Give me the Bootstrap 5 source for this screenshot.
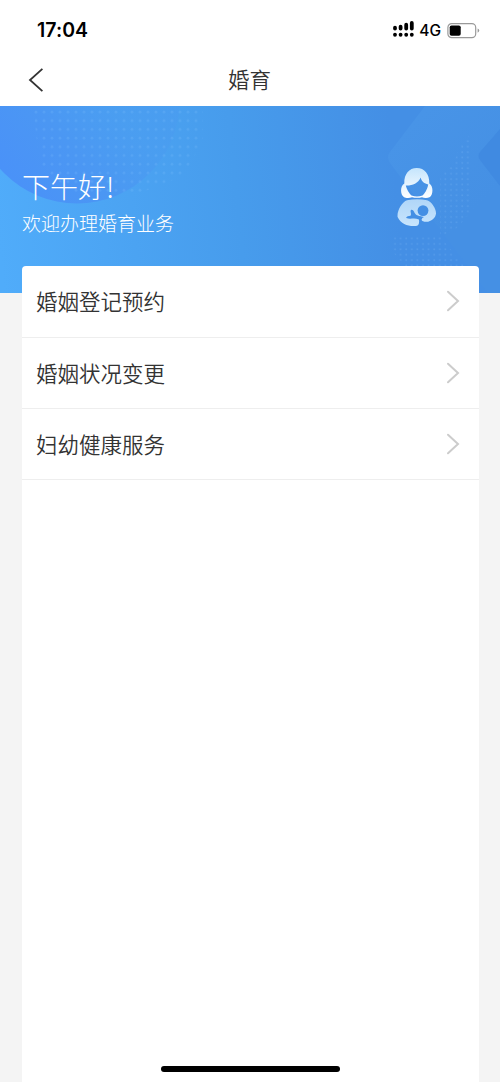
<!DOCTYPE html>
<html lang="zh-CN">
<head>
<meta charset="utf-8">
<meta name="viewport" content="width=device-width, initial-scale=1">
<title>婚育</title>
<link href="https://cdn.jsdelivr.net/npm/bootstrap@5.3.0/dist/css/bootstrap.min.css" rel="stylesheet">
<style>
  body { font-family: "Noto Sans CJK SC", sans-serif; background: #f4f4f4; color: #333; font-weight: 350; }
  .screen { width: 500px; height: 1082px; overflow: hidden; }
  .status { height: 54px; padding: 7px 20px 0 37px; font-family: Inter, sans-serif; color: #000; }
  .clock { font-size: 19.5px; font-weight: 600; letter-spacing: .05px; padding-top: 1px; }
  .network { font-size: 15.5px; font-weight: 500; margin: 0 6px 0 5px; padding-top: 1px; }
  .titlebar { height: 52px; padding: 0 28px; }
  .titlebar h1 { font-size: 21.5px; line-height: 32px; font-weight: 350; padding-right: 1px; margin-top: -2px; }
  .hero { height: 187px; }
  .greeting { padding: 61px 22px 0; color: #fff; }
  .greeting h2 { font-size: 28px; line-height: 38px; font-weight: 300; }
  .greeting p { font-size: 19px; line-height: 28px; margin-top: 4px; font-weight: 300; }
  .panel { margin: -27px 21px 0 22px; border-radius: 4px 4px 0 0; height: 816px; }
  .menu-row { height: 71px; padding: 0 19px 1px 14px; border: 0; font-size: 21.5px; line-height: 32px; color: #333; background: transparent; }
  .menu-row:first-child { height: 72px; }
  .list-group-flush > .menu-row, .list-group-flush > .menu-row:last-child { border-bottom: 1px solid #eee; }
  .mother { left: 397px; top: 61px; }
  .home-bar { width: 179px; height: 6px; left: 160.5px; top: 1066px; background: #000; }
</style>
</head>
<body>
<main class="screen position-relative d-flex flex-column">
  <header class="bg-white">
    <div class="status d-flex align-items-center justify-content-between">
      <span class="clock">17:04</span>
      <div class="d-flex align-items-center">
        <svg class="mb-1" width="21" height="17" viewBox="0 0 21 17" stroke="#000" stroke-width="3.8" stroke-linecap="round" fill="none">
          <path d="M2 7.700v.8M7.600 6.700V8.500M13.200 4.700V8.500M18.800 2.900V8.500M2 14.600v.2M7.600 14.600v.2M13.200 14.600v.2M18.800 14.600v.2"/>
        </svg>
        <span class="network">4G</span>
        <svg width="33" height="16" viewBox="0 0 33 16">
          <rect x=".9" y=".6" width="27.8" height="14" rx="3.8" fill="none" stroke="#999" stroke-width="1.2"/>
          <rect x="2.7" y="2.5" width="11" height="10.2" rx="1.8"/>
          <path d="M30.6 5.400q1.6.6 1.6 2.200t-1.6 2.200z" fill="#999"/>
        </svg>
      </div>
    </div>
    <nav class="titlebar position-relative d-flex align-items-center justify-content-between">
      <a href="#" class="d-flex" aria-label="返回">
        <svg width="16" height="24" viewBox="0 0 16 24" fill="none" stroke="#333" stroke-width="1.8"><path d="M14.4.8 2 12l12.4 11.2"/></svg>
      </a>
      <h1 class="mb-0">婚育</h1>
      <span class="px-2"></span>
    </nav>
  </header>

  <section class="hero position-relative flex-shrink-0">
    <svg class="position-absolute top-0 start-0" width="500" height="187" viewBox="0 0 500 187">
      <defs>
        <linearGradient id="sky" gradientUnits="userSpaceOnUse" x1="0" y1="150" x2="400" y2="110">
          <stop offset="0" stop-color="#50acfa"/><stop offset=".6" stop-color="#479cec"/><stop offset="1" stop-color="#448fe5"/>
        </linearGradient>
        <linearGradient id="orb" gradientUnits="userSpaceOnUse" x1="10" y1="70" x2="110" y2="-10">
          <stop offset="0" stop-color="#4a92f8"/><stop offset=".5" stop-color="#4b97f3"/><stop offset="1" stop-color="#4a9cf0" stop-opacity=".7"/>
        </linearGradient>
        <linearGradient id="facet" gradientUnits="userSpaceOnUse" x1="395" y1="35" x2="470" y2="110">
          <stop offset="0" stop-color="#4894e7"/><stop offset="1" stop-color="#4590e4"/>
        </linearGradient>
        <pattern id="dotsLeft" width="8" height="8.7" patternUnits="userSpaceOnUse" x="33" y="2"><circle cx="3" cy="4" r="1.4" fill="#8cc6ff" opacity=".18"/></pattern>
        <pattern id="dotsRight" width="5.6" height="5.4" patternUnits="userSpaceOnUse"><circle cx="3" cy="3" r=".9" fill="#8cc3fa" opacity=".22"/></pattern>
      </defs>
      <rect width="500" height="187" fill="url(#sky)"/>
      <circle cx="77" cy="-5" r="102.5" fill="url(#orb)"/>
      <path d="M33 0H203V35L183 70 140 87H75L40 62Z" fill="url(#dotsLeft)"/>
      <path d="M425 0 390 46Q386 51 390 57L488 187H500V0Z" fill="url(#facet)"/>
      <path d="M500 23 480 46Q477 50 480 54L500 80Z" fill="#408ae1"/>
      <path d="M472 26V105L455 124 440 130V70L454 56 460 40ZM394 130H440L464 160H405L392 145Z" fill="url(#dotsRight)"/>
    </svg>
    <div class="greeting position-relative">
      <h2 class="m-0">下午好!</h2>
      <p class="mb-0">欢迎办理婚育业务</p>
    </div>
    <svg class="mother position-absolute" width="40" height="60" viewBox="0 0 40 60">
      <defs>
        <linearGradient id="hair" x1="0" y1="0" x2="0" y2="1"><stop offset="0" stop-color="#c5e5fd"/><stop offset="1" stop-color="#fff"/></linearGradient>
        <linearGradient id="robe" x1="0" y1="0" x2="0" y2="1"><stop offset="0" stop-color="#b0d6f8"/><stop offset="1" stop-color="#c8e5fd"/></linearGradient>
      </defs>
      <path fill="url(#hair)" d="M7.300 16.500C7 7 12 1 19.800 1S32.500 7 32.300 16.500C36.500 19 36.300 27.500 33 30 30.500 31.500 27 31.300 25 30.300 22 31 18 31 15 30.300 12.500 31.300 9 31.500 6.800 30 3.200 27.500 3 19 7.300 16.500ZM8.800 18.500C9.500 22 12.500 27 14.500 28.500Q20 30.400 25.500 28.500C27.500 27 30.500 22 31.200 17.500C27.500 16.500 24.500 14.500 23.700 10.500 21 16.500 15 18.800 8.800 18.500Z"/>
      <path fill="url(#robe)" d="M10 33.300Q20 31.300 30 33.300C35 35 39.200 42 39 46.500 38.700 51 34 55 29 54.800 27 54.600 24.500 54.200 24.600 52.600Q24.900 50.600 27 50L22.500 49Q21.500 50 22 53 22.800 59 18.500 59C11 59.500 4 57 .6 50 -.2 44 5 35 10 33.300Z"/>
      <g fill="#448fe4">
        <circle cx="26" cy="43.600" r="5.400"/>
        <path d="M9.300 50.200Q10 49 13.500 48.700C15 46.500 12.700 44.500 14 42.900 17 42.300 17 46.500 19.500 48L23.500 49.500 22 52.400C17 50.500 13 52.700 9.300 51Z"/>
      </g>
    </svg>
  </section>

  <section class="panel bg-white position-relative flex-shrink-0">
    <div class="list-group list-group-flush">
      <a href="#" class="menu-row list-group-item d-flex align-items-center justify-content-between">婚姻登记预约
        <svg width="14" height="22" viewBox="0 0 14 22" fill="none" stroke="#ccc" stroke-width="2" stroke-linecap="round"><path d="M2 1.700 12 11 2 20.300"/></svg></a>
      <a href="#" class="menu-row list-group-item d-flex align-items-center justify-content-between">婚姻状况变更
        <svg width="14" height="22" viewBox="0 0 14 22" fill="none" stroke="#ccc" stroke-width="2" stroke-linecap="round"><path d="M2 1.700 12 11 2 20.300"/></svg></a>
      <a href="#" class="menu-row list-group-item d-flex align-items-center justify-content-between">妇幼健康服务
        <svg width="14" height="22" viewBox="0 0 14 22" fill="none" stroke="#ccc" stroke-width="2" stroke-linecap="round"><path d="M2 1.700 12 11 2 20.300"/></svg></a>
    </div>
  </section>
  <div class="home-bar position-absolute rounded-pill"></div>
</main>
<script src="https://cdn.jsdelivr.net/npm/bootstrap@5.3.0/dist/js/bootstrap.bundle.min.js"></script>
</body>
</html>
